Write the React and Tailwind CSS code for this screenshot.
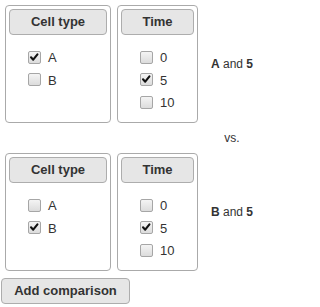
import React from "react";

function Box({ checked }) {
  return (
    <span className="relative inline-block w-[13px] h-[13px] rounded-[2px] border border-[#a6a6a6] bg-gradient-to-b from-[#f4f4f4] to-[#dcdcdc] shrink-0">
      {checked && (
        <svg viewBox="0 0 12 12" className="absolute left-[0px] top-[0px] w-[11px] h-[11px]">
          <path d="M2.2 5.8 L4.6 8.4 L9.2 2.6" fill="none" stroke="#111" strokeWidth="2.3" strokeLinecap="round" strokeLinejoin="round" />
        </svg>
      )}
    </span>
  );
}

function Panel({ title, width, items, checked }) {
  return (
    <div className={`${width} h-[118px] border border-[#aaaaaa] rounded-[4px] p-[3px] flex flex-col`}>
      <div className="h-[26px] w-full bg-[#e6e6e6] border border-[#adadad] rounded-[4px] flex items-center justify-center text-[13px] font-bold text-[#333]">
        {title}
      </div>
      <div className="mt-[11px] pl-[19px] flex flex-col">
        {items.map((it) => (
          <div key={it} className="h-[22.5px] flex items-center gap-[7px] text-[13px] text-[#333]">
            <Box checked={it === checked} />
            <span className="leading-none pt-[1px]">{it}</span>
          </div>
        ))}
      </div>
    </div>
  );
}

function Row({ cell, time }) {
  return (
    <div className="flex items-center">
      <Panel title="Cell type" width="w-[106px]" items={["A", "B"]} checked={cell} />
      <div className="w-[6px]" />
      <Panel title="Time" width="w-[81px]" items={["0", "5", "10"]} checked={time} />
      <div className="ml-[12px] w-[44px] text-center text-[12px] text-[#333]">
        <b>{cell}</b> and <b>{time}</b>
      </div>
    </div>
  );
}

export default function App() {
  return (
    <div className="w-[271px] h-[307px] bg-white font-['Liberation_Sans',Arial,sans-serif] text-[#333] pt-[5px]">
      <div className="pl-[5px]">
        <Row cell="A" time="5" />
        <div className="h-[30px] flex items-center">
          <div className="ml-[205px] w-[44px] text-center text-[12px]">vs.</div>
        </div>
        <Row cell="B" time="5" />
      </div>
      <div className="pl-[1px] pt-[7px]">
        <button className="h-[26px] w-[129px] bg-[#e6e6e6] border border-[#adadad] rounded-[4px] text-[13px] font-bold text-[#333] flex items-center justify-center">
          Add comparison
        </button>
      </div>
    </div>
  );
}
